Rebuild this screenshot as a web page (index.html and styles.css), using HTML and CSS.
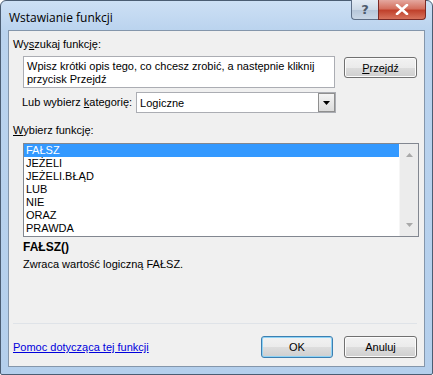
FILE: index.html
```html
<!DOCTYPE html>
<html lang="pl">
<head>
  <meta charset="UTF-8">
  <title>Wstawianie funkcji</title>
  <link rel="stylesheet" href="styles.css">
</head>
<body>
  <div class="window">
    <div class="titlebar">
      <span class="title">Wstawianie funkcji</span>
      <div class="caption">
        <span class="cap help">?</span>
        <span class="cap close">
          <svg width="14" height="11" viewBox="0 0 14 11"><path d="M2 1 L12 10 M12 1 L2 10" stroke="#fff" stroke-width="2.6" stroke-linecap="round"/></svg>
        </span>
      </div>
    </div>

    <div class="client">
      <div class="label search-label">Wy<u>s</u>zukaj funkcję:</div>

      <div class="search-row">
        <div class="textbox">Wpisz krótki opis tego, co chcesz zrobić, a następnie kliknij<br>przycisk Przejdź</div>
        <button class="btn go"><u>P</u>rzejdź</button>
      </div>

      <div class="cat-row">
        <span class="label">Lub wybierz <u>k</u>ategorię:</span>
        <div class="combo">
          <span>Logiczne</span>
          <span class="combo-arrow">
            <svg width="7" height="4" viewBox="0 0 7 4"><path d="M0 0 H7 L3.5 4 Z" fill="#000"/></svg>
          </span>
        </div>
      </div>

      <div class="label list-label"><u>W</u>ybierz funkcję:</div>

      <div class="listbox">
        <ul class="items">
          <li class="selected">FAŁSZ</li>
          <li>JEŻELI</li>
          <li>JEŻELI.BŁĄD</li>
          <li>LUB</li>
          <li>NIE</li>
          <li>ORAZ</li>
          <li>PRAWDA</li>
        </ul>
        <div class="scrollbar">
          <svg width="7" height="4" viewBox="0 0 7 4"><path d="M0 4 H7 L3.5 0 Z" fill="#a9a9a9"/></svg>
          <svg width="7" height="4" viewBox="0 0 7 4"><path d="M0 0 H7 L3.5 4 Z" fill="#a9a9a9"/></svg>
        </div>
      </div>

      <div class="sig">FAŁSZ()</div>
      <div class="desc">Zwraca wartość logiczną FAŁSZ.</div>

      <div class="footer">
        <a class="help-link" href="#">Pomoc dotycząca tej funkcji</a>
        <div class="buttons">
          <button class="btn ok">OK</button>
          <button class="btn">Anuluj</button>
        </div>
      </div>
    </div>
  </div>
</body>
</html>
```
FILE: styles.css
```css
body {
  margin: 0;
  font-family: "Liberation Sans", Arial, sans-serif;
  font-size: 11px;
  color: #000;
  background: #fff;
}
.window {
  width: 433px;
  height: 375px;
  box-sizing: border-box;
  border: 1px solid #4b5d73;
  border-radius: 6px 6px 2px 2px;
  background: linear-gradient(to bottom, #cde0f5 0px, #bad3ee 30px, #b4cfec 100%);
  display: flex;
  flex-direction: column;
}
.titlebar {
  height: 29px;
  display: flex;
  align-items: flex-start;
  justify-content: space-between;
}
.title {
  font-family: "Open Sans", "Liberation Sans", sans-serif;
  font-size: 12px;
  margin: 8px 0 0 8px;
}
.caption {
  display: flex;
  margin-right: 6px;
  margin-top: -1px;
}
.cap {
  height: 19px;
  display: flex;
  align-items: center;
  justify-content: center;
  border: 1px solid #5d6e86;
  border-top: none;
}
.help {
  width: 26px;
  border-radius: 0 0 0 4px;
  border-right: none;
  background: linear-gradient(to bottom, #e3ebf4 0, #cdd9e6 50%, #b5c5d8 51%, #c9d7e6 100%);
  color: #4e5b6c;
  font-family: "DejaVu Sans", sans-serif;
  font-size: 13px;
  font-weight: bold;
}
.close {
  width: 46px;
  border-radius: 0 0 4px 0;
  border-color: #7b2a25;
  background: linear-gradient(to bottom, #e4a89f 0, #d4705f 45%, #c0412c 55%, #d7735d 100%);
}
.client {
  flex: 1;
  margin: 0 7px 7px 7px;
  border: 1px solid #8496ab;
  background: #f0f0f0;
  display: flex;
  flex-direction: column;
  padding: 0 7px 0 4px;
}
.label {
  line-height: 13px;
}
.search-label {
  margin-top: 7px;
}
.search-row {
  display: flex;
  align-items: flex-start;
  margin-top: 5px;
  margin-left: 10px;
}
.textbox {
  width: 312px;
  height: 32px;
  box-sizing: border-box;
  border: 1px solid #abadb3;
  background: #fff;
  padding: 3px 3px;
  line-height: 13px;
}
.btn {
  font-family: "Liberation Sans", Arial, sans-serif;
  font-size: 11px;
  color: #000;
  width: 73px;
  height: 22px;
  padding: 0;
  border: 1px solid #707070;
  border-radius: 3px;
  background: linear-gradient(to bottom, #f2f2f2 0, #ebebeb 50%, #dddddd 51%, #cfcfcf 100%);
  box-shadow: inset 0 0 0 1px #fcfcfc;
}
.go {
  margin-left: 9px;
  margin-top: 1px;
  height: 21px;
}
.cat-row {
  display: flex;
  align-items: center;
  margin-top: 4px;
  margin-left: 9px;
}
.combo {
  margin-left: 4px;
  width: 200px;
  height: 21px;
  box-sizing: border-box;
  border: 1px solid #abadb3;
  background: #fff;
  display: flex;
  align-items: center;
  justify-content: space-between;
  padding-left: 3px;
}
.combo-arrow {
  width: 17px;
  height: 19px;
  box-sizing: border-box;
  border: 1px solid #8f8f8f;
  background: linear-gradient(to bottom, #f4f4f4, #dcdcdc);
  display: flex;
  align-items: center;
  justify-content: center;
}
.list-label {
  margin-top: 11px;
}
.listbox {
  margin-top: 6px;
  margin-left: 10px;
  width: 396px;
  height: 94px;
  box-sizing: border-box;
  border: 1px solid #828790;
  background: #fff;
  display: flex;
}
.items {
  list-style: none;
  margin: 0;
  padding: 0;
  flex: 1;
}
.items li {
  line-height: 13px;
  padding-left: 2px;
}
.items li.selected {
  background: #3399ff;
  color: #fff;
}
.scrollbar {
  width: 18px;
  background: #ececec;
  border-left: 1px solid #f6f6f6;
  display: flex;
  flex-direction: column;
  justify-content: space-between;
  align-items: center;
  padding: 9px 0 9px;
}
.sig {
  margin-top: 4px;
  margin-left: 10px;
  font-weight: bold;
  font-size: 12px;
  line-height: 13px;
}
.desc {
  margin-top: 4px;
  margin-left: 10px;
  line-height: 13px;
}
.footer {
  margin-top: auto;
  border-top: 1px solid #dfe3e8;
  padding: 12px 0 8px;
  display: flex;
  align-items: center;
  justify-content: space-between;
}
.help-link {
  color: #0000dd;
  text-decoration: underline;
}
.buttons {
  display: flex;
  gap: 11px;
}
.ok {
  width: 72px;
  border-color: #3c7fb1;
  box-shadow: inset 0 0 0 1px #8fd3f5;
}
```
